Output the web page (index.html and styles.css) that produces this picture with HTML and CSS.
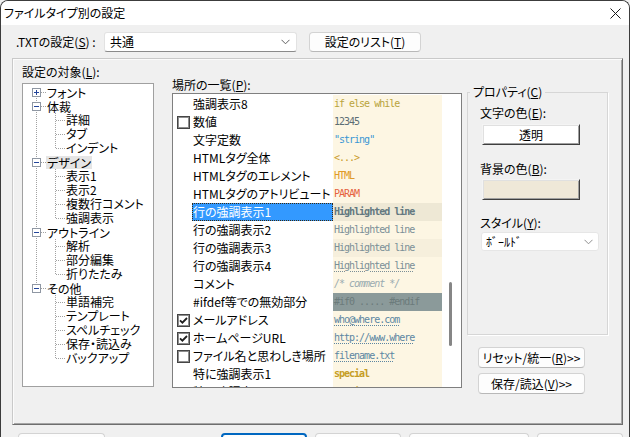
FILE: index.html
```html
<!DOCTYPE html>
<html lang="ja">
<head>
<meta charset="utf-8">
<title>ファイルタイプ別の設定</title>
<link rel="stylesheet" href="styles.css">
</head>
<body>
<div class="window">
  <div class="titlebar">
    <span class="title">ファイルタイプ別の設定</span>
    <svg class="close" width="11" height="11" viewBox="0 0 11 11"><path d="M0.5 0.5L10.5 10.5M10.5 0.5L0.5 10.5" stroke="#1a1a1a" stroke-width="1"/></svg>
  </div>

  <div class="toprow">
    <span class="lbl-type">.TXTの設定(<u>S</u>) :</span>
    <div class="combo"><span>共通</span><svg width="9" height="6" viewBox="0 0 9 6"><path d="M0.5 0.8L4.5 4.8L8.5 0.8" fill="none" stroke="#606060" stroke-width="1"/></svg></div>
    <button class="wbtn btn-list">設定のリスト(<u>T</u>)</button>
  </div>

  <div class="panel">
    <div class="col-tree">
      <div class="lbl">設定の対象(<u>L</u>):</div>
      <div class="tree">
        <div class="node"><svg class="tg" width="9" height="9" viewBox="0 0 9 9"><rect x="0.5" y="0.5" width="8" height="8" fill="#fff" stroke="#8f97a3"/><path d="M2 4.5H7M4.5 2V7" stroke="#23459a"/></svg><span class="t">フォント</span></div>
        <div class="node"><svg class="tg" width="9" height="9" viewBox="0 0 9 9"><rect x="0.5" y="0.5" width="8" height="8" fill="#fff" stroke="#8f97a3"/><path d="M2 4.5H7" stroke="#23459a"/></svg><span class="t">体裁</span></div>
        <div class="kids">
          <div class="leaf">詳細</div>
          <div class="leaf">タブ</div>
          <div class="leaf">インデント</div>
        </div>
        <div class="node"><svg class="tg" width="9" height="9" viewBox="0 0 9 9"><rect x="0.5" y="0.5" width="8" height="8" fill="#fff" stroke="#8f97a3"/><path d="M2 4.5H7" stroke="#23459a"/></svg><span class="t sel">デザイン</span></div>
        <div class="kids">
          <div class="leaf">表示1</div>
          <div class="leaf">表示2</div>
          <div class="leaf">複数行コメント</div>
          <div class="leaf">強調表示</div>
        </div>
        <div class="node"><svg class="tg" width="9" height="9" viewBox="0 0 9 9"><rect x="0.5" y="0.5" width="8" height="8" fill="#fff" stroke="#8f97a3"/><path d="M2 4.5H7" stroke="#23459a"/></svg><span class="t">アウトライン</span></div>
        <div class="kids">
          <div class="leaf">解析</div>
          <div class="leaf">部分編集</div>
          <div class="leaf">折りたたみ</div>
        </div>
        <div class="node"><svg class="tg" width="9" height="9" viewBox="0 0 9 9"><rect x="0.5" y="0.5" width="8" height="8" fill="#fff" stroke="#8f97a3"/><path d="M2 4.5H7" stroke="#23459a"/></svg><span class="t">その他</span></div>
        <div class="kids">
          <div class="leaf">単語補完</div>
          <div class="leaf">テンプレート</div>
          <div class="leaf">スペルチェック</div>
          <div class="leaf">保存・読込み</div>
          <div class="leaf">バックアップ</div>
        </div>
      </div>
    </div>

    <div class="col-list">
      <div class="lbl">場所の一覧(<u>P</u>):</div>
      <div class="list">
        <div class="rows">
          <div class="item"><span class="ck"></span><span class="name">強調表示8</span><span class="sample s-kw">if else while</span></div>
          <div class="item"><span class="ck"><span class="cb"></span></span><span class="name">数値</span><span class="sample s-num">12345</span></div>
          <div class="item"><span class="ck"></span><span class="name">文字定数</span><span class="sample s-str">"string"</span></div>
          <div class="item"><span class="ck"></span><span class="name">HTMLタグ全体</span><span class="sample s-tag">&lt;...&gt;</span></div>
          <div class="item"><span class="ck"></span><span class="name">HTMLタグのエレメント</span><span class="sample s-elem">HTML</span></div>
          <div class="item"><span class="ck"></span><span class="name">HTMLタグのアトリビュート</span><span class="sample s-attr">PARAM</span></div>
          <div class="item sel"><span class="ck"></span><span class="name">行の強調表示1</span><span class="sample s-hl1">Highlighted line</span></div>
          <div class="item"><span class="ck"></span><span class="name">行の強調表示2</span><span class="sample s-hl">Highlighted line</span></div>
          <div class="item"><span class="ck"></span><span class="name">行の強調表示3</span><span class="sample s-hl s-hl3">Highlighted line</span></div>
          <div class="item"><span class="ck"></span><span class="name">行の強調表示4</span><span class="sample s-hl"><span class="dot">Highlighted line</span></span></div>
          <div class="item"><span class="ck"></span><span class="name">コメント</span><span class="sample s-cmt">/* comment */</span></div>
          <div class="item"><span class="ck"></span><span class="name">#ifdef等での無効部分</span><span class="sample s-if0">#if0 ..... #endif</span></div>
          <div class="item"><span class="ck"><span class="cb"><svg width="11" height="11" viewBox="0 0 11 11"><path d="M2 5.3L4.4 7.7L9 3" fill="none" stroke="#1f1f1f" stroke-width="1.8"/></svg></span></span><span class="name">メールアドレス</span><span class="sample s-link"><span class="dot">who@where.com</span></span></div>
          <div class="item"><span class="ck"><span class="cb"><svg width="11" height="11" viewBox="0 0 11 11"><path d="M2 5.3L4.4 7.7L9 3" fill="none" stroke="#1f1f1f" stroke-width="1.8"/></svg></span></span><span class="name">ホームページURL</span><span class="sample s-link"><span class="dot">http://www.where</span></span></div>
          <div class="item"><span class="ck"><span class="cb"></span></span><span class="name">ファイル名と思わしき場所</span><span class="sample s-link"><span class="dot">filename.txt</span></span></div>
          <div class="item"><span class="ck"></span><span class="name">特に強調表示1</span><span class="sample s-sp">special</span></div>
          <div class="item"><span class="ck"></span><span class="name">特に強調表示2</span><span class="sample s-sp">special</span></div>
        </div>
        <div class="track"><div class="thumb"></div></div>
      </div>
    </div>

    <div class="col-props">
      <fieldset class="group">
        <legend>プロパティ(<u>C</u>)</legend>
        <div class="plabel first">文字の色(<u>E</u>):</div>
        <div class="colorbtn">透明</div>
        <div class="plabel second">背景の色(<u>B</u>):</div>
        <div class="colorbtn swatch"></div>
        <div class="plabel third">スタイル(<u>Y</u>):</div>
        <div class="combo style-combo"><span>ﾎﾞｰﾙﾄﾞ</span><svg width="9" height="6" viewBox="0 0 9 6"><path d="M0.5 0.8L4.5 4.8L8.5 0.8" fill="none" stroke="#909090" stroke-width="1"/></svg></div>
      </fieldset>
      <button class="wbtn side-btn first-side">リセット/統一(<u>R</u>)&gt;&gt;</button>
      <button class="wbtn side-btn">保存/読込(<u>V</u>)&gt;&gt;</button>
    </div>
  </div>

  <div class="bottom">
    <button class="wbtn b1" aria-label="インポート"></button>
    <button class="wbtn b2 default" aria-label="OK"></button>
    <button class="wbtn b3" aria-label="キャンセル"></button>
    <button class="wbtn b4" aria-label="エクスポート"></button>
    <button class="wbtn b5" aria-label="ヘルプ"></button>
  </div>
</div>
</body>
</html>
```

FILE: styles.css
```css
* { box-sizing: border-box; }
html, body { margin: 0; padding: 0; }
body {
  width: 630px;
  height: 437px;
  overflow: hidden;
  background: #f0f0f0;
  font-family: "Noto Sans CJK JP", "Noto Sans", sans-serif;
  font-size: 12px;
  color: #000;
  font-feature-settings: "palt";
}
u { text-decoration: underline; text-underline-offset: 1px; }

.window {
  width: 630px;
  height: 437px;
  border: 1px solid #3c3c3c;
  border-bottom: none;
  border-radius: 8px 8px 0 0;
  background: #f0f0f0;
  overflow: hidden;
}

.titlebar {
  height: 24px;
  background: #fff;
  display: flex;
  align-items: center;
  justify-content: space-between;
  padding: 0 8px 0 3px;
}
.title { line-height: 24px; }
.close { display: block; }

.toprow {
  display: flex;
  align-items: center;
  height: 20px;
  margin-top: 7px;
  padding-left: 15px;
}
.lbl-type { width: 88px; flex: none; line-height: 20px; }

.combo {
  width: 193px;
  height: 20px;
  flex: none;
  background: #fff;
  border: 1px solid #e2e2e2;
  border-bottom-color: #8a8a8a;
  border-radius: 3px;
  display: flex;
  align-items: center;
  justify-content: space-between;
  padding: 0 6px 0 5px;
  line-height: 18px;
}

.wbtn {
  font: inherit;
  color: #000;
  background: #fdfdfd;
  border: 1px solid #d3d3d3;
  border-bottom-color: #b8b8b8;
  border-radius: 4px;
  padding: 0;
  line-height: 18px;
  text-align: center;
}
.btn-list { width: 112px; height: 20px; margin-left: 12px; }

.panel {
  margin: 6px 0 0 11px;
  width: 611px;
  height: 367px;
  border: 1px solid;
  border-color: #c9c9c9 #6e6e6e #6e6e6e #c9c9c9;
  box-shadow: inset 1px 1px 0 #fbfbfb, inset -1px -1px 0 #a6a6a6;
  display: flex;
  padding-left: 9px;
}
.lbl { line-height: 14px; }

.col-tree { width: 132px; flex: none; padding-top: 6px; }
.tree {
  margin-top: 4px;
  height: 304px;
  background-color: #fff;
  border: 1px solid #a0a0a0;
  padding-top: 1px;
  background-image: repeating-linear-gradient(to bottom, #a2a2a2 0 1px, transparent 1px 2px);
  background-size: 1px 196px;
  background-position: 13px 8px;
  background-repeat: no-repeat;
}
.node, .leaf {
  height: 14px;
  line-height: 14px;
  white-space: nowrap;
}
.node {
  display: flex;
  align-items: center;
  padding-left: 9px;
  background-image: repeating-linear-gradient(to right, #a2a2a2 0 1px, transparent 1px 2px);
  background-size: 5px 1px;
  background-position: 18px 7px;
  background-repeat: no-repeat;
}
.tg { display: block; flex: none; }
.t { margin-left: 5px; padding: 0 1px; line-height: 13px; }
.t.sel { background: #e5e5e5; }
.kids {
  background-image: repeating-linear-gradient(to bottom, #a2a2a2 0 1px, transparent 1px 2px);
  background-size: 1px calc(100% - 6px);
  background-position: 32px 0;
  background-repeat: no-repeat;
}
.leaf {
  padding-left: 43px;
  background-image: repeating-linear-gradient(to right, #a2a2a2 0 1px, transparent 1px 2px);
  background-size: 9px 1px;
  background-position: 33px 7px;
  background-repeat: no-repeat;
}

.col-list { width: 290px; flex: none; margin-left: 18px; padding-top: 19px; }
.list {
  margin-top: 1px;
  height: 295px;
  border: 1px solid #7f7f7f;
  background: #fff;
  display: flex;
  overflow: hidden;
}
.rows { width: 269px; flex: none; padding-top: 1px; }
.item { display: flex; height: 18px; align-items: center; }
.ck { width: 19px; flex: none; padding-left: 4px; height: 18px; display: flex; align-items: center; }
.cb {
  width: 13px;
  height: 13px;
  border: 1px solid #454545;
  box-shadow: inset 0 0 0 1px #8e8e8e;
  background: #fff;
  display: block;
}
.cb svg { display: block; }
.name {
  width: 141px;
  flex: none;
  height: 18px;
  line-height: 18px;
  padding-left: 1px;
  white-space: nowrap;
}
.item.sel .name {
  background: #3399ff;
  color: #fff;
  outline: 1px dotted #3a2a10;
  outline-offset: -1px;
}
.sample {
  width: 109px;
  flex: none;
  height: 18px;
  line-height: 18px;
  padding-left: 1px;
  background: #fdf6e3;
  font-family: "DejaVu Sans Mono", "Liberation Mono", monospace;
  font-size: 10px;
  letter-spacing: -1px;
  white-space: nowrap;
  overflow: hidden;
}
.s-kw { color: #b9a43c; }
.s-num { color: #5c6e75; }
.s-str { color: #3a97d4; }
.s-tag { color: #c99a2a; }
.s-elem { color: #e09a28; }
.s-attr { color: #e5623f; }
.s-hl1 { color: #637880; font-weight: bold; background: #eee8d5; }
.s-hl { color: #7b8f97; }
.s-hl3 { background: #f6efdc; }
.s-cmt { color: #9aabb0; font-style: italic; }
.s-if0 { color: #6b7b7b; background: #8b9a9a; }
.s-link { color: #5c86a2; }
.s-sp { color: #c69d25; font-weight: bold; }
.dot { text-decoration: underline dotted; text-underline-offset: 2px; }

.track { flex: 1; }
.thumb {
  width: 3px;
  height: 64px;
  margin: 188px 0 0 7px;
  background: #868686;
  border-radius: 2px;
}

.col-props { width: 141px; flex: none; margin-left: 5px; padding-top: 26px; }
.group {
  margin: 0;
  width: 141px;
  height: 250px;
  padding: 0 0 0 12px;
  border: 1px solid #d6d6d6;
  box-shadow: 1px 1px 0 #fff;
}
.group legend {
  padding: 0 3px;
  margin-left: -10px;
  line-height: 14px;
}
.plabel { line-height: 14px; }
.plabel.first { margin-top: 7px; }
.plabel.second { margin-top: 17px; }
.plabel.third { margin-top: 16px; }
.colorbtn {
  width: 98px;
  height: 21px;
  margin-left: 2px;
  margin-top: 4px;
  background: #fff;
  border: 1px solid;
  border-color: #f4f4f4 #3f3f3f #3f3f3f #f4f4f4;
  box-shadow: inset 1px 1px 0 #e0e0e0, inset -1px -1px 0 #a0a0a0;
  text-align: center;
  line-height: 19px;
}
.colorbtn.swatch { background: #efe8d8; margin-top: 3px; }
.style-combo {
  width: 118px;
  height: 19px;
  margin-left: 1px;
  margin-top: 2px;
  border-color: #e6e6e6;
  padding: 0 5px 0 4px;
}
.side-btn { display: block; width: 107px; height: 21px; margin-left: 11px; margin-top: 5px; }
.side-btn.first-side { margin-top: 12px; }

.bottom { display: flex; margin-top: 8px; padding-left: 17px; }
.bottom .wbtn { height: 23px; flex: none; }
.b1 { width: 87px; }
.b2 { width: 86px; margin-left: 116px; }
.b3 { width: 86px; margin-left: 8px; }
.b4 { width: 120px; margin-left: 8px; }
.b5 { width: 86px; margin-left: 8px; }
.default { border: 2px solid #0067c0; }
```
